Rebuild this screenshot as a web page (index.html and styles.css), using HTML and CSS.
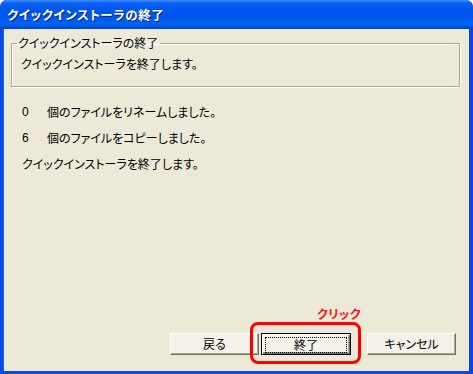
FILE: index.html
```html
<!DOCTYPE html>
<html lang="ja">
<head>
<meta charset="utf-8">
<title>クイックインストーラの終了</title>
<link rel="stylesheet" href="styles.css">
</head>
<body>
<div class="window">
  <div class="titlebar"><span class="title">クイックインストーラの終了</span></div>
  <div class="client">
    <fieldset class="group">
      <legend class="group-label">クイックインストーラの終了</legend>
      <p class="group-text">クイックインストーラを終了します。</p>
    </fieldset>
    <div class="lines">
      <div class="line"><span class="num">0</span><span>個のファイルをリネームしました。</span></div>
      <div class="line"><span class="num">6</span><span>個のファイルをコピーしました。</span></div>
      <div class="line">クイックインストーラを終了します。</div>
    </div>
    <div class="buttons">
      <button class="btn back">戻る</button>
      <div class="highlight-wrap">
        <span class="click-label">クリック</span>
        <span class="red-ring"></span>
        <button class="btn default"><span class="focus">終了</span></button>
      </div>
      <button class="btn cancel">キャンセル</button>
    </div>
  </div>
</div>
</body>
</html>
```

FILE: styles.css
```css
html, body {
  margin: 0;
  padding: 0;
  background: #ffffff;
}
body {
  width: 473px;
  height: 374px;
  overflow: hidden;
  font-family: "Noto Sans CJK JP", "Liberation Sans", sans-serif;
  font-size: 12px;
  font-feature-settings: "palt";
  color: #000;
}
.window {
  width: 473px;
  height: 374px;
  display: flex;
  flex-direction: column;
  box-sizing: border-box;
  border-radius: 7px 7px 0 0;
  overflow: hidden;
  background: #0A48E0;
}
.titlebar {
  height: 29px;
  flex: 0 0 29px;
  display: flex;
  align-items: center;
  padding-left: 7px;
  background: linear-gradient(to bottom, #3B8DFF 0px, #0C62F2 3px, #0058EE 8px, #0055EA 16px, #0163F6 24px, #0050E0 27px, #0042CC 29px);
}
.title {
  color: #fff;
  font-weight: bold;
  font-size: 12.5px;
  letter-spacing: 0.6px;
  text-shadow: 1px 1px 0 #0A1E7A;
  line-height: 14px;
  margin-top: 1px;
}
.client {
  flex: 1;
  margin: 0 3px 3px 3px;
  background: #ECE9D8;
  display: flex;
  flex-direction: column;
  padding: 7px 9px 16px 7px;
  box-sizing: border-box;
  border-left: 1px solid #1C6CF0;
  border-right: 1px solid #0B3FC8;
}
.group {
  margin: 0;
  padding: 3px 9px 7px 9px;
  border: 1px solid #ACA899;
  box-shadow: inset 1px 1px 0 #fff, 1px 1px 0 #fff;
  height: 39px;
  box-sizing: content-box;
}
.group-label {
  padding: 0 2px 0 1px;
  margin-left: -4px;
  line-height: 14px;
}
.group-text {
  margin: 4px 0 0 0;
  line-height: 14px;
}
.lines {
  margin-top: 12px;
  display: flex;
  flex-direction: column;
  padding-left: 11px;
}
.line {
  height: 26px;
  line-height: 26px;
  display: flex;
}
.num {
  width: 25px;
  font-family: "Liberation Sans", sans-serif;
}
.buttons {
  margin-top: auto;
  display: flex;
  justify-content: flex-end;
  align-items: flex-end;
  padding-right: 4px;
}
.btn {
  font-family: inherit;
  font-size: 12px;
  font-feature-settings: "palt";
  width: 89px;
  height: 22px;
  padding: 0;
  margin: 0;
  background: #F3F1E8;
  border: 1px solid;
  border-color: #fff #716F64 #716F64 #fff;
  box-shadow: inset -1px -1px 0 #ACA899;
  color: #000;
  box-sizing: border-box;
  line-height: 18px;
}
.back {
  margin-right: 2px;
}
.highlight-wrap {
  position: relative;
  margin-right: 16px;
}
.default {
  width: 90px;
  display: block;
  border: 1px solid #000;
  box-shadow: inset 1px 1px 0 #fff, inset -1px -1px 0 #716F64, inset -2px -2px 0 #ACA899;
  padding: 3px;
}
.focus {
  display: block;
  height: 14px;
  line-height: 14px;
  border: 1px dotted #000;
}
.red-ring {
  position: absolute;
  left: -11px;
  top: -11px;
  width: 111px;
  height: 42px;
  border: 3px solid #FF0000;
  border-radius: 8px;
  box-sizing: border-box;
}
.click-label {
  position: absolute;
  right: -10px;
  top: -26px;
  color: #FF1010;
  font-weight: bold;
  font-size: 12px;
  line-height: 14px;
  letter-spacing: 0.5px;
}
```
